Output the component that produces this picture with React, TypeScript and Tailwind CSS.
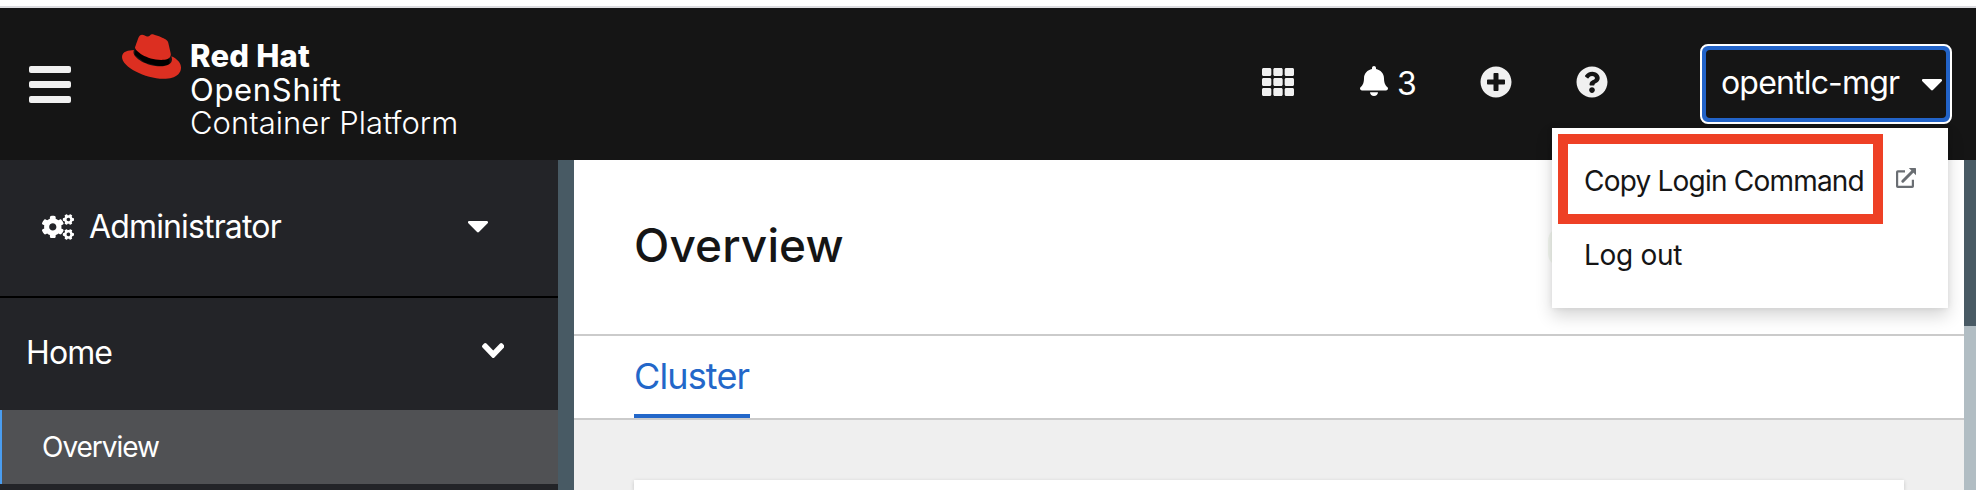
import type { ReactNode } from "react";
import { FaCogs, FaPlusCircle, FaQuestionCircle, FaRedhat, FaTh } from "react-icons/fa";

function Caret({ className }: { className: string }) {
  return (
    <svg viewBox="12 192 296 168.6" preserveAspectRatio="none" className={className} fill="currentColor" aria-hidden="true">
      <path d="M31.3 192h257.3c17.8 0 26.7 21.5 14.1 34.1L174.1 354.8c-7.8 7.8-20.5 7.8-28.3 0L17.2 226.1C4.6 213.5 13.5 192 31.3 192z" />
    </svg>
  );
}

function AngleDown({ className }: { className: string }) {
  return (
    <svg viewBox="0 152.6 320 206.8" preserveAspectRatio="none" className={className} fill="currentColor" aria-hidden="true">
      <path d="M143 352.3L7 216.3c-9.4-9.4-9.4-24.6 0-33.9l22.6-22.6c9.4-9.4 24.6-9.4 33.9 0l96.4 96.4 96.4-96.4c9.4-9.4 24.6-9.4 33.9 0l22.6 22.6c9.4 9.4 9.4 24.6 0 33.9l-136 136c-9.2 9.4-24.4 9.4-33.8 0z" />
    </svg>
  );
}

function Bell({ className }: { className: string }) {
  return (
    <svg viewBox="0 0 448 512" preserveAspectRatio="none" className={className} fill="currentColor" aria-hidden="true">
      <path d="M224 512c35.32 0 63.97-28.65 63.97-64H160.03c0 35.35 28.65 64 63.97 64zm215.39-149.71c-19.32-20.76-55.47-51.99-55.47-154.29 0-77.7-54.48-139.9-127.94-155.16V32c0-17.67-14.32-32-31.98-32s-31.98 14.33-31.98 32v20.84C118.56 68.1 64.08 130.3 64.08 208c0 102.3-36.15 133.53-55.47 154.29-6 6.45-8.66 14.16-8.61 21.71.11 16.4 12.98 32 32.1 32h383.8c19.12 0 32-15.6 32.1-32 .05-7.55-2.61-15.27-8.61-21.71z" />
    </svg>
  );
}

function ExternalLink() {
  return (
    <svg viewBox="0 0 20 20" className="h-5 w-5 text-[#6a6e73]" fill="none" stroke="currentColor" aria-hidden="true">
      <path d="M9 3.3H1.8a.7.7 0 0 0-.7.7v14.2a.7.7 0 0 0 .7.7h14.4a.7.7 0 0 0 .7-.7v-6.4" strokeWidth="2.2" />
      <path d="M6.8 13.2 17 3" strokeWidth="3" strokeLinecap="round" />
      <path d="M12.8 0h6.5a.7.7 0 0 1 .7.7v6.5z" fill="currentColor" stroke="none" />
    </svg>
  );
}

function Hamburger() {
  return (
    <button className="mt-[58px] ml-[29px] flex h-[37px] w-[42px] flex-col justify-between" aria-label="Navigation">
      <span className="h-[7px] w-full rounded-[2px] bg-[#f0f0f0]" />
      <span className="h-[7px] w-full rounded-[2px] bg-[#f0f0f0]" />
      <span className="h-[7px] w-full rounded-[2px] bg-[#f0f0f0]" />
    </button>
  );
}

function Brand() {
  return (
    <div className="ml-[51px] flex">
      <div className="relative mt-[19px] h-[59px] w-[59px]">
        <svg viewBox="0 0 512 512" className="absolute inset-0 h-full w-full" aria-hidden="true">
          <path d="M120 180 L410 270 L415 330 L330 340 L200 310 L110 240z" fill="#000" />
        </svg>
        <FaRedhat className="relative h-full w-full text-[#dc2f21]" />
      </div>
      <div className="mt-[31px] ml-[9px] text-[31px] leading-[33.5px] whitespace-nowrap text-white">
        <div className="font-extrabold tracking-[0.2px]">Red Hat</div>
        <div className="tracking-[0.7px]">OpenShift</div>
        <div className="font-light tracking-[0.02px]">Container Platform</div>
      </div>
    </div>
  );
}

function DropdownItem({ children }: { children: ReactNode }) {
  return <div className="flex h-[74px] items-center pl-8 text-[28px] whitespace-nowrap text-[#151515]">{children}</div>;
}

function UserMenu() {
  return (
    <div className="absolute top-[84px] right-1 z-10 h-[180px] w-[396px] bg-white pt-4 shadow-[0_8px_16px_rgba(3,3,3,0.16),0_0_6px_rgba(3,3,3,0.08)]">
      <DropdownItem>
        <span className="w-[311px] tracking-[-0.79px]">Copy Login Command</span>
        <span className="-mt-[6px] ml-px">
          <ExternalLink />
        </span>
      </DropdownItem>
      <DropdownItem>
        <span className="tracking-[-0.29px]">Log out</span>
      </DropdownItem>
      <div className="absolute top-[6px] left-[6px] h-[90px] w-[325px] border-[10px] border-[#ee4025]" />
    </div>
  );
}

function Masthead() {
  return (
    <header className="flex h-[152px] shrink-0 bg-[#151515]">
      <Hamburger />
      <Brand />
      <div className="mt-9 mr-6 ml-auto flex h-20 text-[#f0f0f0]">
        <FaTh className="mt-[22px] h-8 w-8" />
        <Bell className="mt-[22px] ml-[66px] h-[30px] w-7 text-white" />
        <span className="mt-[19px] ml-[9px] w-[21px] text-[32px] leading-[42px] text-white">3</span>
        <FaPlusCircle className="mt-[22px] ml-[62px] h-8 w-8" />
        <FaQuestionCircle className="mt-[22px] ml-16 h-8 w-8" />
        <div className="relative ml-[92px]">
          <button className="flex h-20 w-[252px] items-center rounded-[8px] border-2 border-white bg-[#2263c8] p-1 text-white">
            <span className="flex h-full w-full items-center justify-between rounded-[4px] bg-[#151515] pr-[4px] pl-[15px]">
              <span className="-mt-[2px] text-[32px] tracking-[-0.82px]">opentlc-mgr</span>
              <Caret className="mt-[2px] h-[11.5px] w-[20px]" />
            </span>
          </button>
          <UserMenu />
        </div>
      </div>
    </header>
  );
}

function Sidebar() {
  return (
    <nav className="flex w-[558px] shrink-0 flex-col bg-[#232428] text-white">
      <div className="flex h-[138px] items-center border-b-2 border-black pr-[70px] pb-[2px] pl-[42px]">
        <FaCogs className="h-[26px] w-8" />
        <span className="ml-[15px] text-[32px] tracking-[-0.85px]">Administrator</span>
        <Caret className="ml-auto h-[11.5px] w-[20px]" />
      </div>
      <div className="flex h-28 items-center pr-[54px] pb-[2px] pl-[26px]">
        <span className="text-[32px] tracking-[-0.9px]">Home</span>
        <AngleDown className="-mt-[5px] ml-auto h-[15px] w-[22.5px]" />
      </div>
      <div className="flex h-[74px] items-center border-l-2 border-[#4a9df0] bg-[#505154] pb-px pl-10 text-[28px] tracking-[-1.03px]">
        Overview
      </div>
    </nav>
  );
}

function Content() {
  return (
    <main className="relative flex min-w-0 flex-1 flex-col overflow-hidden bg-[#efefef]">
      <div className="h-44 shrink-0 border-b-2 border-[#cbcbcb] bg-white pt-[55px] pl-[60px]">
        <h1 className="text-[46px] leading-[60px] font-medium tracking-[0.12px] text-[#151515]">Overview</h1>
      </div>
      <span className="absolute top-[66px] right-[386px] h-[42px] w-[30px] rounded-full bg-[#f4f8f1]" />
      <div className="flex h-[84px] shrink-0 border-b-2 border-[#cbcbcb] bg-white pl-[60px]">
        <div className="flex w-[116px] items-center border-b-4 border-[#2367c9] pt-px text-[36px] tracking-[-0.87px] text-[#2367c9]">
          Cluster
        </div>
      </div>
      <div className="mt-[60px] mr-[60px] ml-[60px] flex-1 bg-white shadow-[0_2px_4px_rgba(3,3,3,0.12),0_0_4px_rgba(3,3,3,0.06)]" />
    </main>
  );
}

export default function App() {
  return (
    <div className="flex h-[490px] w-[1976px] flex-col overflow-hidden bg-white font-['Inter',sans-serif]">
      <div className="h-2 shrink-0 border-b-2 border-[#dcdce0] bg-white" />
      <Masthead />
      <div className="flex min-h-0 flex-1">
        <Sidebar />
        <div className="w-4 shrink-0 bg-[#485a64]" />
        <Content />
        <div className="w-3 shrink-0 bg-[#b1bdc3]">
          <div className="h-[166px] bg-[#485a64]" />
        </div>
      </div>
    </div>
  );
}
